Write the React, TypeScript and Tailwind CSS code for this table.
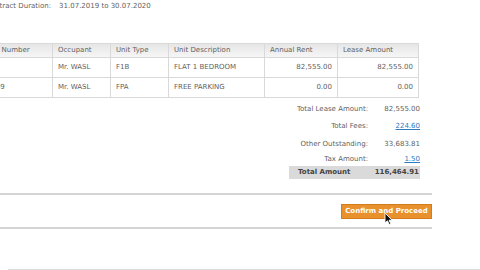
import React from 'react';

const rows = [
  { num: '10', occupant: 'Mr. WASL', type: 'F1B', desc: 'FLAT 1 BEDROOM', rent: '82,555.00', lease: '82,555.00' },
  { num: '0239', occupant: 'Mr. WASL', type: 'FPA', desc: 'FREE PARKING', rent: '0.00', lease: '0.00' },
];

const cell = 'border border-[#d9d9d9] px-[5px] align-middle';

const App = () => {
  return (
    <div
      className="relative w-[480px] h-[270px] overflow-hidden bg-white text-[#5f5f5f] text-[7px] leading-none"
      style={{ fontFamily: '"DejaVu Sans", Verdana, sans-serif' }}
    >
      <div className="ml-[-60px] w-[492px]">
        {/* contract */}
        <div className="pt-[3px] pl-[46px] h-[43px] whitespace-nowrap">
          <span>Contract Duration:</span>
          <span className="ml-[8px]">31.07.2019 to 30.07.2020</span>
        </div>

        {/* units table */}
        <table className="border-collapse w-[478px] table-fixed">
          <colgroup>
            <col className="w-[112px]" />
            <col className="w-[58px]" />
            <col className="w-[58px]" />
            <col className="w-[96px]" />
            <col className="w-[73px]" />
            <col className="w-[81px]" />
          </colgroup>
          <thead>
            <tr className="h-[14px] bg-gradient-to-b from-[#e6e6e6] to-[#f7f7f7]">
              <th className={`${cell} pl-[44px] text-left font-normal whitespace-nowrap`}>Unit Number</th>
              <th className={`${cell} text-left font-normal`}>Occupant</th>
              <th className={`${cell} text-left font-normal`}>Unit Type</th>
              <th className={`${cell} text-left font-normal whitespace-nowrap`}>Unit Description</th>
              <th className={`${cell} text-left font-normal`}>Annual Rent</th>
              <th className={`${cell} text-left font-normal`}>Lease Amount</th>
            </tr>
          </thead>
          <tbody>
            {rows.map((r) => (
              <tr key={r.type} className="h-[20px]">
                <td className={`${cell} pl-[46px] whitespace-nowrap`}>{r.num}</td>
                <td className={cell}>{r.occupant}</td>
                <td className={cell}>{r.type}</td>
                <td className={`${cell} whitespace-nowrap`}>{r.desc}</td>
                <td className={`${cell} text-right`}>{r.rent}</td>
                <td className={`${cell} text-right`}>{r.lease}</td>
              </tr>
            ))}
          </tbody>
        </table>

        {/* totals */}
        <div className="ml-[349px] w-[131px] mt-[3px] text-right whitespace-nowrap">
          <div className="flex h-[16px] items-center">
            <span className="w-[79px]">Total Lease Amount:</span>
            <span className="w-[52px]">82,555.00</span>
          </div>
          <div className="flex h-[19px] items-center">
            <span className="w-[79px]">Total Fees:</span>
            <span className="w-[52px] text-[#2b7bbf] underline">224.60</span>
          </div>
          <div className="flex h-[16px] items-center">
            <span className="w-[79px]">Other Outstanding:</span>
            <span className="w-[52px]">33,683.81</span>
          </div>
          <div className="flex h-[14px] items-center">
            <span className="w-[79px]">Tax Amount:</span>
            <span className="w-[52px] text-[#2b7bbf] underline">1.50</span>
          </div>
          <div className="flex h-[13px] items-center bg-[#dadada] font-bold text-[#444] px-[1px]">
            <span className="flex-1 text-left pl-[8px]">Total Amount</span>
            <span>116,464.91</span>
          </div>
        </div>

        {/* actions */}
        <div className="mt-[14px] border-t-2 border-b-2 border-[#d4d4d4] h-[36px] flex items-center justify-end">
          <button className="h-[15px] w-[91px] bg-[#e8912d] border border-[#d27c1c] text-white font-bold text-[7px] leading-none whitespace-nowrap">
            Confirm and Proceed
          </button>
        </div>
      </div>

      <div className="mt-[40px] ml-[8px] border-t border-[#dcdcdc]" />

      {/* mouse pointer */}
      <svg className="absolute left-[384px] top-[212px]" width="9" height="14" viewBox="0 0 9 14">
        <path d="M1 1 L1 11 L3.5 8.8 L5.2 12.5 L6.8 11.8 L5.1 8.2 L8.2 8.2 Z" fill="#111" stroke="#fff" strokeWidth="0.9" />
      </svg>
    </div>
  );
};

export default App;
